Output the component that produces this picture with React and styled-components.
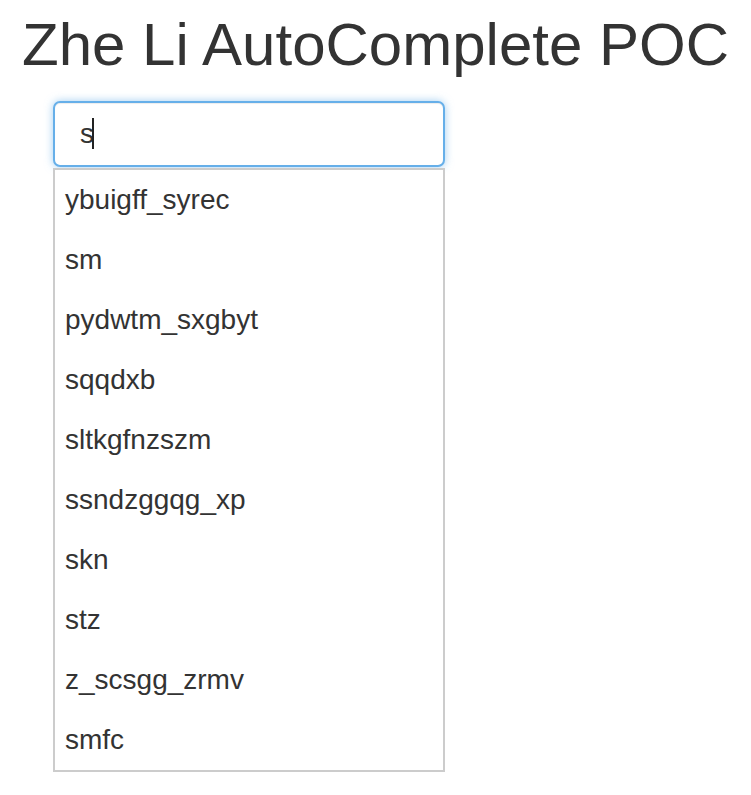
import React, { useState } from "react"
import styled, { createGlobalStyle } from "styled-components"

const GlobalStyle = createGlobalStyle`
  html, body {
    margin: 0;
    padding: 0;
    background: #fff;
  }
  body {
    font-family: "Liberation Sans", Arial, Helvetica, sans-serif;
    color: #333;
  }
`

const Page = styled.div`
  width: 751px;
  padding-top: 12px;
`

const Title = styled.h1`
  margin: 0 0 23px;
  font-size: 60px;
  font-weight: 400;
  line-height: 66px;
  text-align: center;
  color: #333;
`

const Search = styled.div`
  position: relative;
  width: 392px;
  margin-left: 53px;
`

const SearchInput = styled.input`
  box-sizing: border-box;
  display: block;
  width: 100%;
  height: 66px;
  padding: 0 25px;
  font-family: "Liberation Sans", Arial, sans-serif;
  font-size: 28px;
  color: #333;
  caret-color: transparent;
  background: #fff;
  border: 2px solid #66afe9;
  border-radius: 7px;
  outline: none;
  box-shadow: inset 0 1px 1px rgba(0, 0, 0, 0.075), 0 0 8px rgba(102, 175, 233, 0.6);
`

// blinking caret frozen in its visible state
const Caret = styled.span`
  position: absolute;
  left: 39px;
  top: 17px;
  width: 2px;
  height: 31px;
  background: #222;
  pointer-events: none;
`

const Suggestions = styled.ul`
  list-style: none;
  margin: 1px 0 0;
  padding: 0;
  border: 2px solid #ccc;
  background: #fff;
`

const Suggestion = styled.li`
  height: 60px;
  padding: 0 10px;
  display: flex;
  align-items: center;
  font-size: 28px;
  color: #333;
`

const results = [
  "ybuigff_syrec",
  "sm",
  "pydwtm_sxgbyt",
  "sqqdxb",
  "sltkgfnzszm",
  "ssndzggqg_xp",
  "skn",
  "stz",
  "z_scsgg_zrmv",
  "smfc",
]

export default function App() {
  const [query, setQuery] = useState("s")

  return (
    <Page>
      <GlobalStyle />
      <Title>Zhe Li AutoComplete POC</Title>
      <Search>
        <SearchInput autoFocus value={query} onChange={e => setQuery(e.target.value)} />
        <Caret />
        <Suggestions>
          {results.map(word => (
            <Suggestion key={word}>{word}</Suggestion>
          ))}
        </Suggestions>
      </Search>
    </Page>
  )
}
